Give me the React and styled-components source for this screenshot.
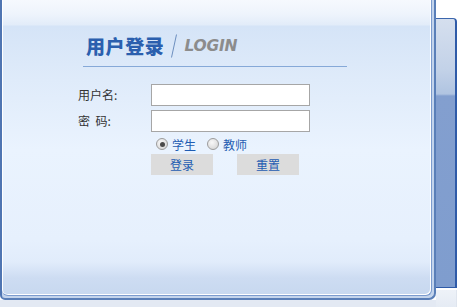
import React from "react";
import styled, { createGlobalStyle } from "styled-components";

const GlobalStyle = createGlobalStyle`
  html, body {
    margin: 0;
    padding: 0;
    background: #ffffff;
    overflow: hidden;
  }
  body {
    font-family: "Noto Sans CJK SC", "DejaVu Sans", sans-serif;
  }
`;

const Stage = styled.div`
  width: 468px;
  height: 307px;
  display: flex;
  align-items: stretch;
`;

const MainColumn = styled.div`
  width: 436px;
  display: flex;
  flex-direction: column;
`;

const Frame = styled.div`
  height: 300px;
  box-sizing: border-box;
  background: #c3d4ec;
  border-left: 2px solid #4f75b2;
  border-right: 2px solid #5a7fb8;
  border-bottom: 2px solid #5a7fb8;
  border-bottom-right-radius: 7px;
  border-bottom-left-radius: 5px;
  padding: 0 2px 2px 0;
  display: flex;
`;

const Panel = styled.div`
  flex: 1;
  box-sizing: border-box;
  border-right: 1px solid #7b9bce;
  border-bottom: 1px solid #7b9bce;
  border-bottom-right-radius: 6px;
  border-bottom-left-radius: 6px;
  box-shadow: inset -1px -1px 0 #ffffff, inset 1px 0 0 #ffffff;
  background: linear-gradient(
    to bottom,
    #f6f9fe 0,
    #eef4fc 14px,
    #e2ecf9 25px,
    #d5e4f7 26px,
    #dfebfa 80px,
    #eaf3fe 150px,
    #e6f0fd 240px,
    #e1ecfb 262px,
    #cddcf2 278px,
    #c7d8ef 100%
  );
  padding-top: 31px;
`;

const Header = styled.div`
  margin-left: 81px;
  width: 261px;
  display: flex;
  align-items: center;
  gap: 6px;
  padding-left: 3px;
  padding-bottom: 5px;
  border-bottom: 1px solid #86a9d8;
`;

const Title = styled.span`
  font-family: "Noto Sans CJK SC", sans-serif;
  font-size: 19px;
  font-weight: 800;
  color: #2b5fae;
  letter-spacing: 0.6px;
  line-height: 30px;
`;

const Login = styled.span`
  font-family: "DejaVu Sans", "Liberation Sans", sans-serif;
  font-size: 15.5px;
  font-weight: 700;
  font-style: italic;
  color: #8c8c8c;
  letter-spacing: -0.2px;
`;

const Form = styled.div`
  margin-top: 17px;
  margin-left: 76px;
  display: grid;
  grid-template-columns: 73px 159px;
  row-gap: 4px;
  align-items: center;
`;

const Label = styled.label`
  font-size: 12px;
  color: #333333;
  line-height: 22px;
  white-space: pre;
`;

const Input = styled.input`
  box-sizing: border-box;
  width: 159px;
  height: 22px;
  border: 1px solid #a6a6a6;
  background: #ffffff;
  margin: 0;
  outline: none;
`;

const RoleRow = styled.div`
  grid-column: 2;
  display: flex;
  align-items: center;
  padding-left: 5px;
  height: 14px;
  margin-top: 1px;
`;

const RoleOption = styled.label`
  display: flex;
  align-items: center;
  gap: 4px;
  font-size: 12px;
  color: #1f5cb2;
  margin-right: ${(p) => p.$gap || 0}px;
`;

const Radio = styled.span`
  box-sizing: border-box;
  width: 12px;
  height: 12px;
  border-radius: 50%;
  border: 1px solid #9c9c9c;
  background: radial-gradient(circle at 40% 35%, #f8f8f8 0, #d8d8d8 80%);
  display: flex;
  align-items: center;
  justify-content: center;

  &::after {
    content: "";
    width: 5px;
    height: 5px;
    border-radius: 50%;
    background: ${(p) => (p.$checked ? "#4a4a4a" : "transparent")};
  }
`;

const Buttons = styled.div`
  grid-column: 2;
  display: flex;
  gap: 24px;
  margin-top: -1px;
`;

const Button = styled.button`
  width: 62px;
  height: 21px;
  border: none;
  background: #dcdcdc;
  color: #1f5cb2;
  font-family: "Noto Sans CJK SC", sans-serif;
  font-size: 12px;
  padding: 0;
  cursor: pointer;
`;

const BottomStrip = styled.div`
  flex: 1;
  background: #e3e9f3;
`;

const SideColumn = styled.div`
  width: 21px;
  display: flex;
  flex-direction: column;
`;

const BackPanel = styled.div`
  margin-top: 18px;
  height: 270px;
  box-sizing: border-box;
  border-top: 1px solid #3c66ad;
  border-right: 2px solid #2f5ba8;
  border-bottom: 1px solid #2f5ba8;
  border-top-right-radius: 4px;
  background: linear-gradient(
    to bottom,
    #d5dfee 0,
    #c3d2e8 50px,
    #b0c4e1 75px,
    #839fcf 77px,
    #7f9dce 100%
  );
`;

const SideStrip = styled.div`
  flex: 1;
  margin-top: 2px;
  background: linear-gradient(to bottom, #eef2f8, #e5ebf4);
  border-right: 1px solid #dfe5ee;
`;

const Slash = () => (
  <svg width="8" height="24" viewBox="0 0 8 24" aria-hidden="true">
    <line x1="6.5" y1="0.5" x2="1.5" y2="23.5" stroke="#6d8fbf" strokeWidth="1" />
  </svg>
);

export default function App() {
  return (
    <>
      <GlobalStyle />
      <Stage>
        <MainColumn>
          <Frame>
            <Panel>
              <Header>
                <Title>用户登录</Title>
                <Slash />
                <Login>LOGIN</Login>
              </Header>
              <Form>
                <Label>用户名:</Label>
                <Input type="text" />
                <Label>{"密  码:"}</Label>
                <Input type="password" />
                <RoleRow>
                  <RoleOption $gap={11}>
                    <Radio $checked />
                    学生
                  </RoleOption>
                  <RoleOption>
                    <Radio />
                    教师
                  </RoleOption>
                </RoleRow>
                <Buttons>
                  <Button>登录</Button>
                  <Button>重置</Button>
                </Buttons>
              </Form>
            </Panel>
          </Frame>
          <BottomStrip />
        </MainColumn>
        <SideColumn>
          <BackPanel />
          <SideStrip />
        </SideColumn>
      </Stage>
    </>
  );
}
